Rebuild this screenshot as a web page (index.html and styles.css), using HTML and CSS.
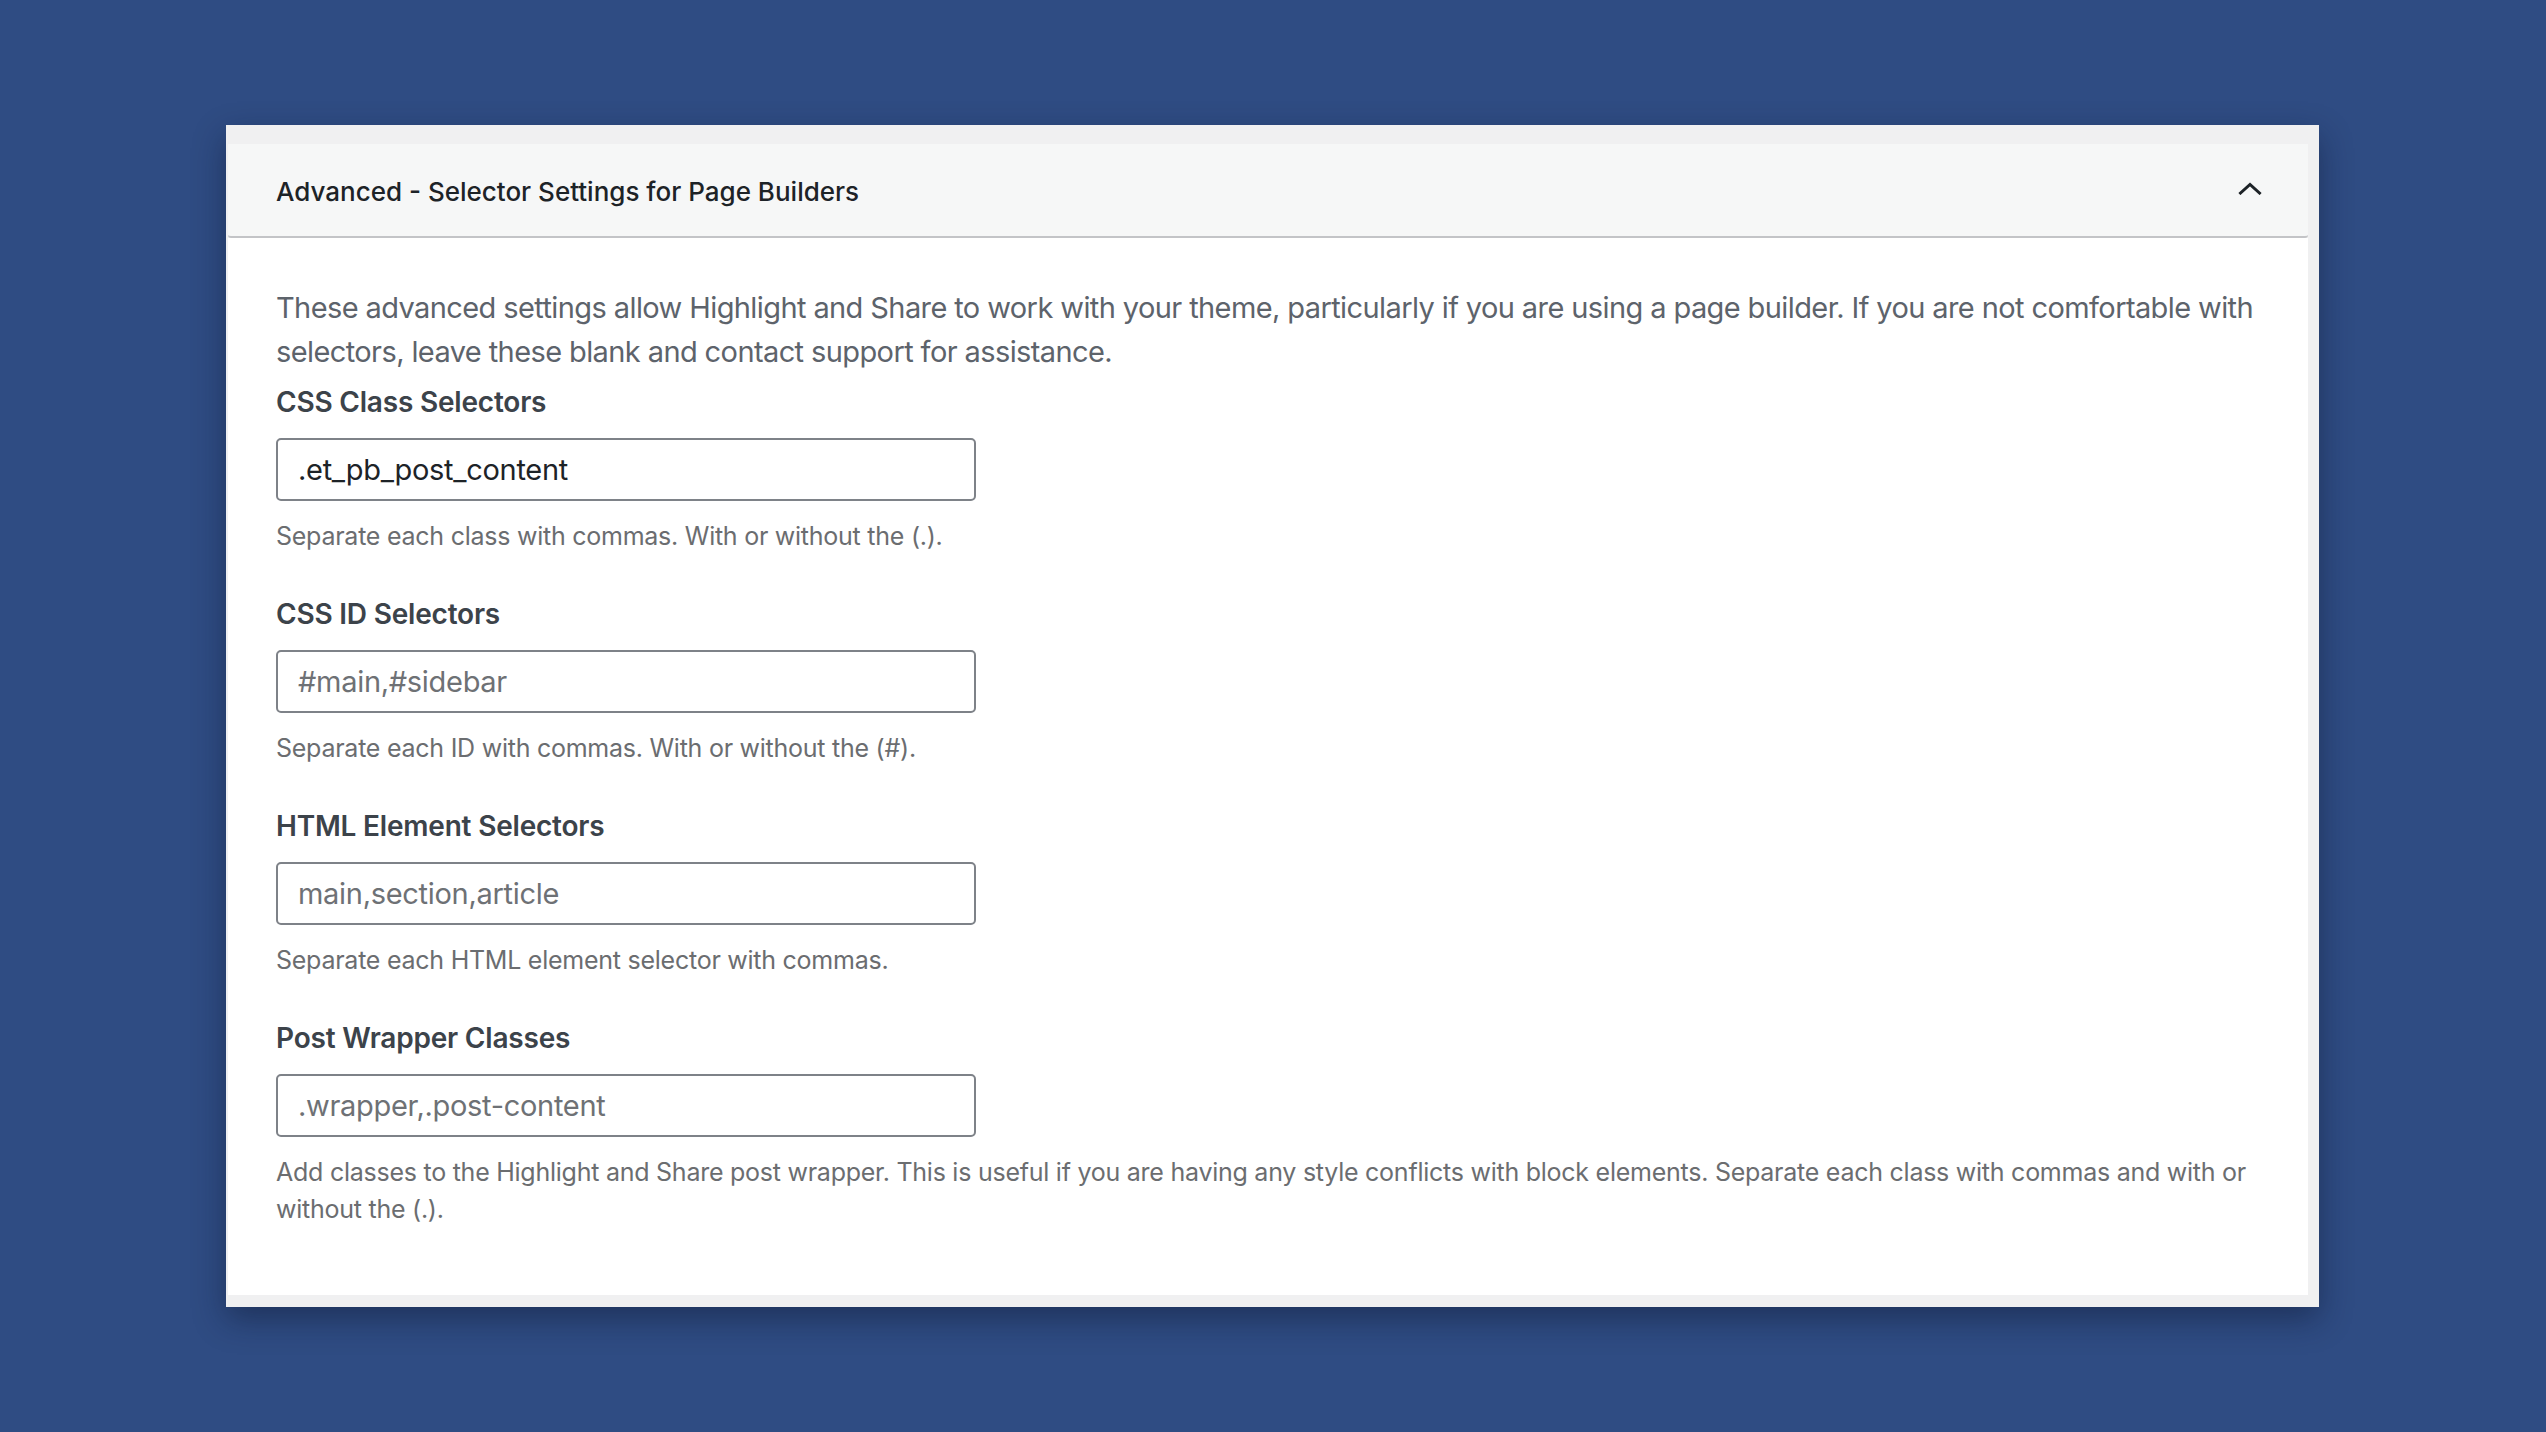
FILE: index.html
```html
<!DOCTYPE html>
<html lang="en">
<head>
<meta charset="utf-8">
<title>Advanced - Selector Settings for Page Builders</title>
<link rel="stylesheet" href="styles.css">
</head>
<body>
<div class="card">
  <div class="panel-header">
    <span class="panel-title">Advanced - Selector Settings for Page Builders</span>
    <svg class="chevron" width="24" height="14" viewBox="0 0 24 14" aria-hidden="true"><path d="M2.5 12 L12 3.5 L21.5 12" fill="none" stroke="#1d2327" stroke-width="3" stroke-linecap="square"/></svg>
  </div>
  <div class="panel-body">
    <p class="intro">These advanced settings allow Highlight and Share to work with your theme, particularly if you are using a page builder. If you are not comfortable with selectors, leave these blank and contact support for assistance.</p>

    <div class="field">
      <label class="field-label" for="f1">CSS Class Selectors</label>
      <input class="field-input" id="f1" type="text" value=".et_pb_post_content">
      <p class="field-help">Separate each class with commas. With or without the (.).</p>
    </div>

    <div class="field">
      <label class="field-label" for="f2">CSS ID Selectors</label>
      <input class="field-input" id="f2" type="text" placeholder="#main,#sidebar">
      <p class="field-help">Separate each ID with commas. With or without the (#).</p>
    </div>

    <div class="field">
      <label class="field-label" for="f3">HTML Element Selectors</label>
      <input class="field-input" id="f3" type="text" placeholder="main,section,article">
      <p class="field-help">Separate each HTML element selector with commas.</p>
    </div>

    <div class="field field-last">
      <label class="field-label" for="f4">Post Wrapper Classes</label>
      <input class="field-input" id="f4" type="text" placeholder=".wrapper,.post-content">
      <p class="field-help">Add classes to the Highlight and Share post wrapper. This is useful if you are having any style conflicts with block elements. Separate each class with commas and with or without the (.).</p>
    </div>
  </div>
</div>
</body>
</html>
```

FILE: styles.css
```css
html, body {
  margin: 0;
  padding: 0;
}

body {
  background: #2f4c83;
  font-family: Inter, "Noto Sans", "Liberation Sans", sans-serif;
  padding-top: 125px;
  padding-left: 226px;
  min-height: 1432px;
  box-sizing: border-box;
}

.card {
  width: 2093px;
  box-sizing: border-box;
  background: #f0f0f1;
  padding: 19px 11px 12px 2px;
  box-shadow: 0 12px 30px rgba(10, 20, 45, 0.45);
}

.panel-header {
  height: 94px;
  box-sizing: border-box;
  background: #f6f7f7;
  border-bottom: 2px solid #c3c4c7;
  border-radius: 0 0 3px 3px;
  display: flex;
  align-items: center;
  justify-content: space-between;
  padding: 0 46px 0 48px;
}

.panel-title {
  font-size: 26px;
  font-weight: 500;
  color: #1d2327;
  letter-spacing: 0;
  margin-top: 3px;
}

.chevron {
  display: block;
  margin-top: -4px;
}

.panel-body {
  background: #ffffff;
  padding: 48px 36px 67px 48px;
}

.intro {
  margin: 0 0 11px 0;
  font-size: 29px;
  line-height: 44px;
  color: #5d636b;
  letter-spacing: -0.6px;
}

.field {
  display: flex;
  flex-direction: column;
  align-items: flex-start;
  margin-bottom: 42px;
}

.field-last {
  margin-bottom: 0;
}

.field-label {
  font-size: 28px;
  line-height: 34px;
  font-weight: 600;
  color: #3c434a;
  letter-spacing: -0.2px;
}

.field-input {
  margin-top: 19px;
  width: 700px;
  height: 63px;
  box-sizing: border-box;
  border: 2px solid #7e8288;
  border-radius: 5px;
  padding: 0 20px;
  font-family: Inter, "Noto Sans", "Liberation Sans", sans-serif;
  font-size: 29px;
  color: #1d2327;
  background: #ffffff;
  outline: none;
  letter-spacing: -0.3px;
}

.field-input::placeholder {
  color: #6e7175;
  opacity: 1;
}

.field-help {
  margin: 17px 0 0 0;
  font-size: 25px;
  line-height: 37px;
  color: #6b6d70;
  letter-spacing: -0.25px;
}
```
